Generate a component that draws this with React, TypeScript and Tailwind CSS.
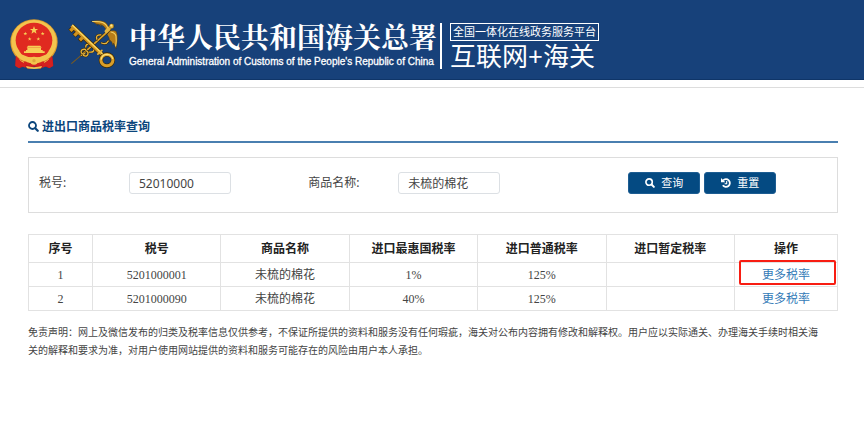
import React, { useState } from 'react';

interface TariffRow {
  codeTs: string;
  gName: string;
  favoredRate: string;
  generalRate: string;
  tempRate: string;
}

const rows: TariffRow[] = [
  { codeTs: '5201000001', gName: '未梳的棉花', favoredRate: '1%', generalRate: '125%', tempRate: '' },
  { codeTs: '5201000090', gName: '未梳的棉花', favoredRate: '40%', generalRate: '125%', tempRate: '' },
];

// 首尾列固定宽度, 其余列平分
const columns = [
  { title: '序号', width: 'w-16' },
  { title: '税号', width: '' },
  { title: '商品名称', width: '' },
  { title: '进口最惠国税率', width: '' },
  { title: '进口普通税率', width: '' },
  { title: '进口暂定税率', width: '' },
  { title: '操作', width: 'w-[103px]' },
];

const STAR = 'M0-10 2.4-3.1 9.5-3.1 3.8 1.2 5.9 8.1 0 4-5.9 8.1-3.8 1.2-9.5-3.1-2.4-3.1Z';

function SearchIcon({ className }: { className: string }) {
  return (
    <svg viewBox="0 0 22 22" className={className} fill="none" stroke="currentColor" strokeLinecap="round" aria-hidden="true">
      <circle cx="9" cy="9" r="7" strokeWidth="3.6" />
      <path d="m15 15 4.5 4.5" strokeWidth="4.4" />
    </svg>
  );
}

function HistoryIcon({ className }: { className: string }) {
  return (
    <svg viewBox="0 0 22 22" className={className} fill="none" stroke="currentColor" aria-hidden="true">
      <path d="M4.5 5.5A8.5 8.5 0 1 1 4 16" strokeWidth="4" />
      <path d="M0 0v9.5h9.5Z" fill="currentColor" stroke="none" />
      <path d="M12.5 6.5v6H8" strokeWidth="2.4" />
    </svg>
  );
}

// 国徽
function NationalEmblem() {
  return (
    <svg viewBox="32 56 144 150" className="h-[50px] w-12 shrink-0" aria-hidden="true">
      <path d="M50 160 48 196 60 204 74 198 88 206 105 198 122 206 136 198 150 204 162 196 158 160Z" fill="#c8171c" />
      <ellipse cx="104" cy="125" rx="71" ry="68" fill="#d99a2b" />
      <ellipse cx="104" cy="124" rx="68" ry="65" fill="#f3c44e" />
      <ellipse cx="104" cy="120" rx="55" ry="53" fill="#e02a20" />
      <path d="M60 152h88l-8 12q-36 22-72 0Z" fill="#e02a20" />
      <g fill="#f7cf55">
        <path d={STAR} transform="translate(104 90) scale(1.3)" />
        <path d={STAR} transform="translate(78 100) scale(.6)" />
        <path d={STAR} transform="translate(91 116) scale(.6)" />
        <path d={STAR} transform="translate(117 116) scale(.6)" />
        <path d={STAR} transform="translate(130 100) scale(.6)" />
        <path d="M86 136h37l4 6H82Z" />
        <path d="M84 143h41v6H84ZM80 149h50v4h6v5H74v-5h6Z" />
      </g>
      <path d="M62 160q42 22 84 0l4 8q-46 24-92 0Z" fill="#f3c44e" />
      <path d="M50 166q12 16 32 18l-4 18-12-5-8 6-10-6Z" fill="#d5201f" />
      <path d="M158 166q-12 16-32 18l4 18 12-5 8 6 11-6Z" fill="#d5201f" />
      <path d="M78 184q26 10 52 0l-4 10q-22 8-44 0Z" fill="#d5201f" />
      <circle cx="104" cy="181" r="12" fill="#f3c44e" />
      <circle cx="104" cy="181" r="5" fill="#e0a63a" />
      <path d="M60 176q6 8 14 10M148 176q-6 8-14 10" stroke="#f3c44e" strokeWidth="3" fill="none" />
      <path d="M80 197q24 7 48 0l-3 7q-21 4-42 0Z" fill="#f3c44e" />
    </svg>
  );
}

// 关徽: 金钥匙与商神杖
function CustomsEmblem() {
  return (
    <svg viewBox="204 62 152 148" className="h-[50px] w-[51px] shrink-0" fill="none" strokeLinecap="round" strokeLinejoin="round" aria-hidden="true">
      {/* 商神杖 */}
      <path d="M215 194 244 169" stroke="#7b5a20" strokeWidth="3" />
      <path d="M244 169 328 94" stroke="#3c2905" strokeWidth="8" />
      <path d="M244 169 328 94" stroke="#d9a22e" strokeWidth="5" />
      <path d="M256 152q-12-2-13 7 1 9 11 6M250 170q10 5 13-3t-6-11M270 136q-14-1-13 9M268 160q14 2 13-9M290 122q-5-14 12-13M304 133q14 6 20-6" stroke="#3c2905" strokeWidth="7" />
      <path d="M256 152q-12-2-13 7 1 9 11 6M250 170q10 5 13-3t-6-11M270 136q-14-1-13 9M268 160q14 2 13-9M290 122q-5-14 12-13M304 133q14 6 20-6" stroke="#e5b540" strokeWidth="4" />
      {/* 双翼 */}
      <path d="M274 68q22-4 36 1 13 5 17 22l-8 6q-6-16-19-20 4 3 4 7-6-8-15-8 4 3 4 5-6-8-19-13Z" fill="#b87d18" stroke="#3c2905" strokeWidth="1" />
      <path d="M277 69q20-1 30 3 12 5 16 18" stroke="#f6d465" strokeWidth="3" />
      <path d="M329 97q12-4 19 2 7 17-1 52-3-13-8-18 1 5-1 7-3-12-8-15 1 4-1 6-2-16-8-23Z" fill="#b87d18" stroke="#3c2905" strokeWidth="1" />
      <path d="M332 100q12 2 15 12 2 16-1 30" stroke="#f6d465" strokeWidth="3" />
      <path d="m318 98 16-16" stroke="#e5b540" strokeWidth="10" />
      <circle cx="334" cy="83" r="7" fill="#e5b540" stroke="#3c2905" strokeWidth="1" />
      <circle cx="333" cy="81" r="3" fill="#ffe993" />
      {/* 钥匙 */}
      <path d="M216 82 305 167M221 87 210 98M234 100 222 112M250 114 238 127" stroke="#3c2905" strokeWidth="14" strokeLinecap="butt" />
      <ellipse cx="320" cy="184" rx="18" ry="17" stroke="#3c2905" strokeWidth="13" />
      <path d="M215 81 304 166M221 87 211 97M234 100 223 111M250 114 239 125" stroke="#d0921f" strokeWidth="10" strokeLinecap="butt" />
      <path d="M218 81 306 165" stroke="#f8d864" strokeWidth="4" />
      <ellipse cx="320" cy="184" rx="18" ry="17" stroke="#d99e29" strokeWidth="9" />
      <path d="M303 181q3-14 18-14 13 1 16 12" stroke="#fae07a" strokeWidth="4" />
      <path d="M293 166 305 155" stroke="#e5b540" strokeWidth="5" />
    </svg>
  );
}

export default function App() {
  const [codeTs, setCodeTs] = useState('52010000');
  const [gName, setGName] = useState('未梳的棉花');

  const handleReset = () => {
    setCodeTs('');
    setGName('');
  };

  return (
    <div className="min-h-screen bg-white font-['Noto_Sans','Noto_Sans_CJK_SC',sans-serif] text-xs text-[#444]">
      {/* 顶部 */}
      <header className="flex h-20 items-center border-b border-[#0f3568] bg-[#17417a] pt-2 pl-[10px] whitespace-nowrap text-white">
        <NationalEmblem />
        <div className="ml-[10px] flex">
          <CustomsEmblem />
        </div>
        <div className="ml-[10px] shrink-0">
          <h1 className="font-['Noto_Serif_CJK_SC','Noto_Sans_CJK_SC',serif] text-[28px] leading-9 font-bold">中华人民共和国海关总署</h1>
          <p className="font-['Liberation_Sans',sans-serif] text-[10px] leading-4 [-webkit-text-stroke:0.3px_white]">
            General Administration of Customs of the People's Republic of China
          </p>
        </div>
        <div className="ml-[3px] flex shrink-0 items-center gap-2 pt-1">
          <div className="h-[46px] w-0.5 bg-white" />
          <div>
            <p className="mb-0.5 border border-white px-0.5 text-[11px] leading-4">全国一体化在线政务服务平台</p>
            <p className="text-[26px] leading-[26px]">互联网+海关</p>
          </div>
        </div>
      </header>
      <div className="h-2 border-b border-[#ddd]" />

      <main className="px-7 pt-7 pr-[26px]">
        <h2 className="flex h-[27px] items-start gap-[3px] border-b-2 border-[#4a7fb0] leading-[22px] font-bold text-[#0b457c]">
          <SearchIcon className="mt-[5px] size-[11px]" />
          进出口商品税率查询
        </h2>

        {/* 查询条件 */}
        <form className="mt-[14px] grid h-14 grid-cols-3 items-center border border-[#ddd] pb-1" onSubmit={(e) => e.preventDefault()}>
          <div className="flex items-center pl-[10px]">
            <label htmlFor="codeTs" className="w-[90px]">税号:</label>
            <input
              id="codeTs"
              value={codeTs}
              onChange={(e) => setCodeTs(e.target.value)}
              className="h-[22px] w-[102px] rounded-[3px] border border-[#dce0e4] px-[9px] text-[#444]"
            />
          </div>
          <div className="flex items-center pl-[10px]">
            <label htmlFor="gName" className="w-[90px]">商品名称:</label>
            <input
              id="gName"
              value={gName}
              onChange={(e) => setGName(e.target.value)}
              className="h-[22px] w-[102px] rounded-[3px] border border-[#dce0e4] px-[9px] text-[#444]"
            />
          </div>
          <div className="flex justify-center gap-1 text-[11px] text-white">
            <button type="submit" className="flex h-[22px] w-[72px] items-center justify-center gap-1.5 rounded-[3px] border border-[#1d5d92] bg-[#044a82]">
              <SearchIcon className="size-[10px]" />
              查询
            </button>
            <button type="button" onClick={handleReset} className="flex h-[22px] w-[72px] items-center justify-center gap-1.5 rounded-[3px] border border-[#1d5d92] bg-[#044a82]">
              <HistoryIcon className="size-[10px]" />
              重置
            </button>
          </div>
        </form>

        {/* 税率列表 */}
        <table className="mt-[21px] w-full table-fixed border-collapse text-center">
          <thead>
            <tr className="h-7 text-[#222]">
              {columns.map((col) => (
                <th key={col.title} className={`${col.width} border border-[#e2e2e2] font-bold`}>{col.title}</th>
              ))}
            </tr>
          </thead>
          <tbody className="font-['Liberation_Serif','Noto_Sans_CJK_SC',serif]">
            {rows.map((row, idx) => (
              <tr key={row.codeTs} className="h-6">
                <td className="border border-[#e2e2e2]">{idx + 1}</td>
                <td className="border border-[#e2e2e2]">{row.codeTs}</td>
                <td className="border border-[#e2e2e2]">{row.gName}</td>
                <td className="border border-[#e2e2e2]">{row.favoredRate}</td>
                <td className="border border-[#e2e2e2]">{row.generalRate}</td>
                <td className="border border-[#e2e2e2]">{row.tempRate}</td>
                <td className="relative border border-[#e2e2e2]">
                  <a href="#more" className="text-[#337ab7]">更多税率</a>
                  {idx === 0 && (
                    <span className="pointer-events-none absolute -top-[3px] right-px bottom-px left-1 rounded-[2px] border-2 border-[#f81d12]" />
                  )}
                </td>
              </tr>
            ))}
          </tbody>
        </table>

        <p className="mt-3 pr-4 text-[10px] leading-[18px]">
          免责声明：网上及微信发布的归类及税率信息仅供参考，不保证所提供的资料和服务没有任何瑕疵，海关对公布内容拥有修改和解释权。用户应以实际通关、办理海关手续时相关海关的解释和要求为准，对用户使用网站提供的资料和服务可能存在的风险由用户本人承担。
        </p>
      </main>
    </div>
  );
}
